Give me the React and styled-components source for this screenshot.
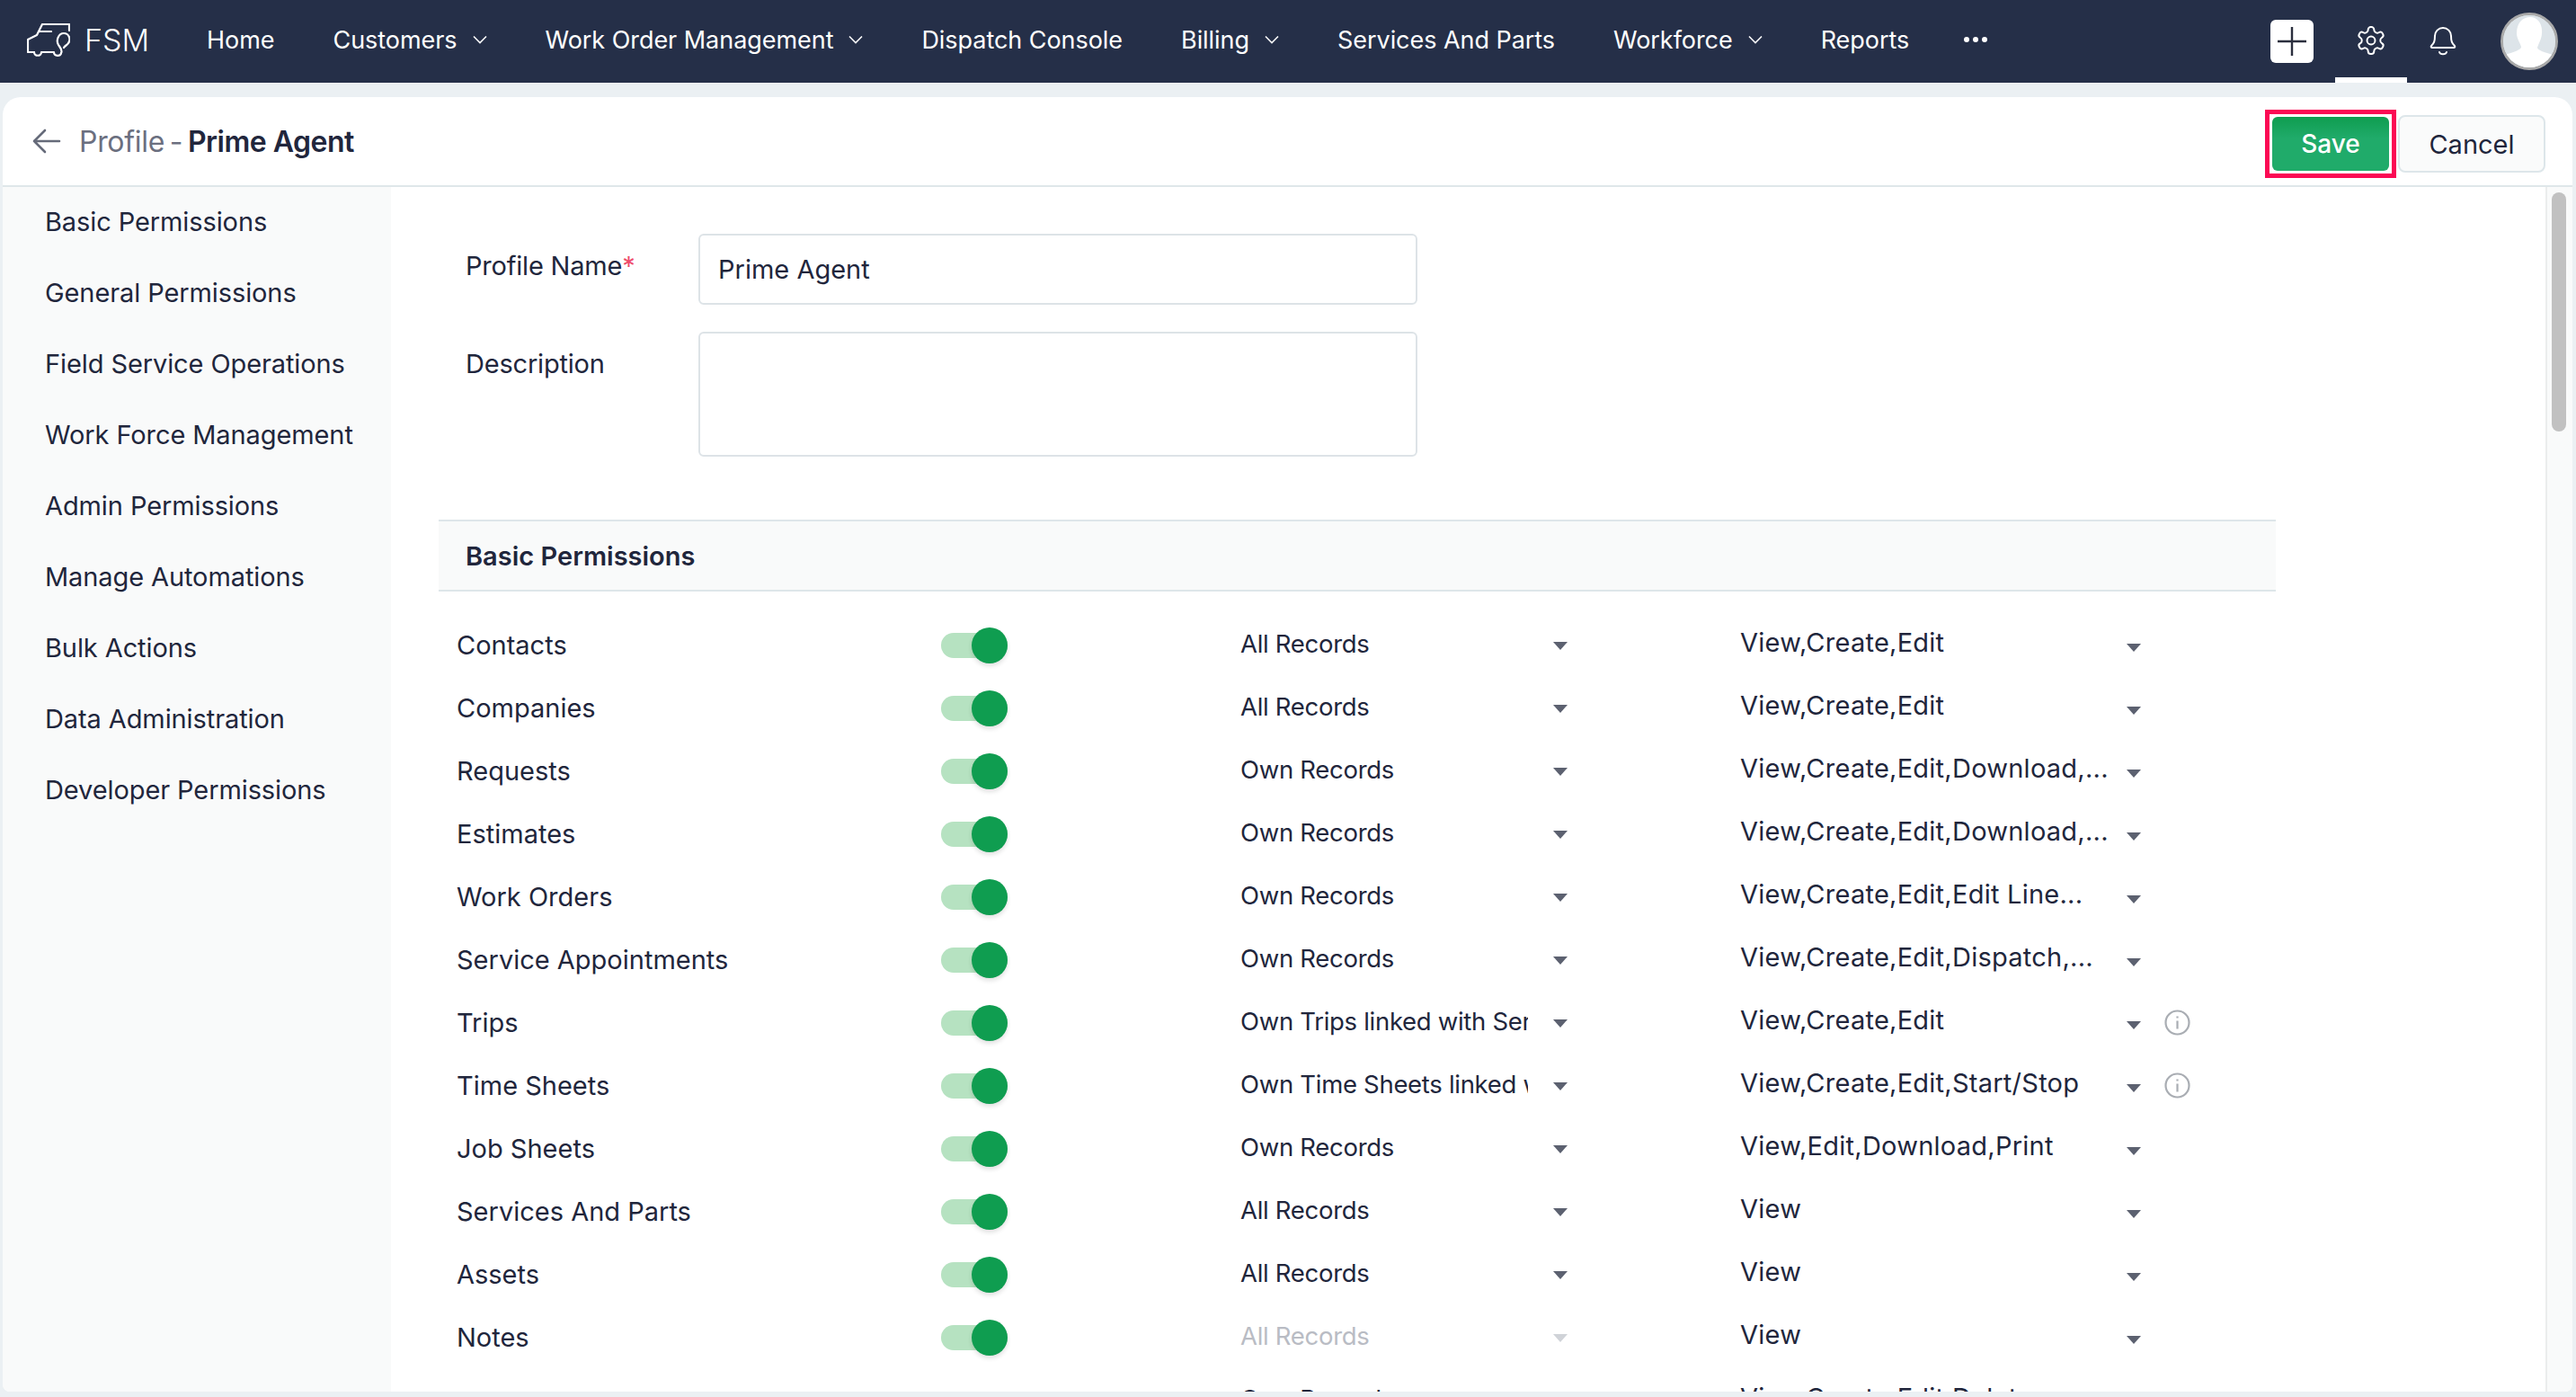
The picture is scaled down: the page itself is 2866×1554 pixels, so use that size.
import React from 'react'
import styled, { createGlobalStyle } from 'styled-components'

const GlobalStyle = createGlobalStyle`
  html, body {
    margin: 0;
    height: 100%;
    overflow: hidden;
    background: #ebf0f3;
    font-family: Inter, "Noto Sans", sans-serif;
    color: #21263c;
  }
  * { box-sizing: border-box; }
`

const Page = styled.div`
  height: 1554px;
  overflow: hidden;
  display: flex;
  flex-direction: column;
`

const TopBar = styled.header`
  height: 92px;
  flex: none;
  background: #252f48;
  display: flex;
  align-items: center;
  padding: 0 20px 0 30px;
  color: #fff;
`

const Brand = styled.div`
  display: flex;
  align-items: center;
  gap: 16px;
  font-size: 34px;
  font-weight: 300;
  width: 200px;
  flex: none;
  padding-bottom: 4px;
`

const Nav = styled.nav`
  display: flex;
  align-items: center;
  gap: 65px;
  flex: 1;
  padding-bottom: 4px;
`

const NavItem = styled.a`
  display: flex;
  align-items: center;
  gap: 17px;
  font-size: 27px;
  letter-spacing: -0.05px;
  white-space: nowrap;
`

const MoreItem = styled(NavItem)`
  margin-left: -6px;
`

const TopIcons = styled.div`
  display: flex;
  align-items: center;
  height: 92px;
`

const PlusBox = styled.div`
  width: 48px;
  height: 48px;
  background: #fff;
  border-radius: 6px;
  display: flex;
  align-items: center;
  justify-content: center;
  margin-right: 24px;
`

const IconTab = styled.div`
  width: 80px;
  height: 92px;
  display: flex;
  align-items: center;
  justify-content: center;
  border-bottom: 6px solid ${p => (p.$active ? '#fff' : 'transparent')};
  padding-top: 4px;
`

const Avatar = styled.div`
  width: 64px;
  height: 64px;
  border-radius: 50%;
  border: 3px solid #a9a9a9;
  background: #dde4e9;
  margin-left: 24px;
  overflow: hidden;
`

const Card = styled.main`
  height: 1440px;
  flex: none;
  margin: 16px 4px 0 3px;
  background: #fff;
  border-radius: 20px 20px 8px 8px;
  display: flex;
  flex-direction: column;
  overflow: hidden;
`

const CardHeader = styled.div`
  height: 100px;
  flex: none;
  border-bottom: 2px solid #dfe7ea;
  display: flex;
  align-items: center;
  padding: 0 30px 0 33px;
`

const Title = styled.div`
  flex: 1;
  display: flex;
  align-items: center;
  gap: 20px;
  font-size: 32px;
  color: #6b6f7f;
  letter-spacing: -0.3px;
  word-spacing: -3px;
  b {
    color: #21263c;
    font-weight: 600;
    word-spacing: 0;
    letter-spacing: -0.5px;
  }
`

const SaveHighlight = styled.div`
  border: 5px solid #fb0a54;
  padding: 3px;
  margin-top: 6px;
  display: flex;
`

const SaveButton = styled.button`
  width: 130px;
  height: 60px;
  border: none;
  border-radius: 6px;
  background: linear-gradient(#0f9d50 0, #20ab6a 40%);
  color: #fff;
  font: 500 28px Inter, sans-serif;
`

const CancelButton = styled.button`
  width: 164px;
  height: 64px;
  margin: 6px 0 0 2px;
  border: 2px solid #dde6ea;
  border-radius: 8px;
  background: #fafbfb;
  color: #21263c;
  font: 400 29px Inter, sans-serif;
`

const Body = styled.div`
  flex: 1;
  display: flex;
  min-height: 0;
`

const SideMenu = styled.aside`
  width: 432px;
  flex: none;
  background: #f9fafa;
  display: flex;
  flex-direction: column;
`

const SideItem = styled.div`
  height: 79px;
  padding: 0 0 2px 47px;
  display: flex;
  align-items: center;
  font-size: 29px;
  letter-spacing: -0.1px;
  white-space: nowrap;
`

const Content = styled.section`
  flex: 1;
  min-width: 0;
  padding: 52px 0 0 53px;
  overflow: hidden;
`

const FormRow = styled.div`
  display: flex;
  margin-bottom: 30px;
`

const FormLabel = styled.label`
  width: 289px;
  padding: 18px 0 0 30px;
  font-size: 29px;
  letter-spacing: -0.2px;
  i {
    color: #ee4b6c;
    font-style: normal;
  }
`

const TextBox = styled.div`
  width: 800px;
  height: ${p => (p.$tall ? '139px' : '79px')};
  border: 2px solid #dde3e7;
  border-radius: 6px;
  padding: 0 20px;
  display: flex;
  align-items: center;
  font-size: 29px;
`

const SectionHead = styled.h2`
  width: 2044px;
  height: 80px;
  margin: 70px 0 0;
  padding: 0 30px;
  background: #f9fafa;
  border-top: 2px solid #dee6ea;
  border-bottom: 2px solid #dee6ea;
  display: flex;
  align-items: center;
  font-size: 29px;
  font-weight: 600;
`

const Rows = styled.div`
  padding-top: 24px;
`

const Row = styled.div`
  height: 70px;
  display: grid;
  grid-template-columns: 539px 333px 556px 1fr;
  align-items: center;
  padding-left: 20px;
  font-size: 29px;
`

const Toggle = styled.div`
  position: relative;
  width: 74px;
  height: 28px;
  margin-top: 2px;
  background: #b6e2c1;
  border-radius: 14px;
  &::after {
    content: '';
    position: absolute;
    right: 0;
    top: -6px;
    width: 40px;
    height: 40px;
    border-radius: 50%;
    background: #0f9d50;
    box-shadow: 0 3px 5px rgba(0, 0, 0, 0.12);
  }
`

const ScopeCell = styled.div`
  display: flex;
  align-items: center;
  justify-content: space-between;
  width: 364px;
  font-size: 27.5px;
  letter-spacing: -0.3px;
  color: ${p => (p.$off ? '#b9bcc4' : '#21263c')};
`

const ScopeText = styled.span`
  width: 320px;
  margin-top: -2px;
  overflow: hidden;
  white-space: nowrap;
`

const Caret = styled.span`
  width: 0;
  height: 0;
  border-left: 8px solid transparent;
  border-right: 8px solid transparent;
  border-top: 9px solid ${p => (p.$off ? '#d0d3d8' : '#5c6170')};
  margin-top: ${p => (p.$low ? '6px' : '2px')};
  flex: none;
`

const PermCell = styled.div`
  display: flex;
  align-items: center;
  width: 510px;
  font-size: 29px;
  letter-spacing: 0.25px;
`

const PermText = styled.span`
  width: 430px;
  margin-top: -5px;
  white-space: nowrap;
`

const InfoIcon = styled.svg`
  margin-left: 26px;
  flex: none;
`

const ScrollTrack = styled.div`
  width: 30px;
  flex: none;
  background: #f9fafa;
  border-left: 2px solid #ebeded;
  padding: 6px 0 0 5px;
`

const ScrollThumb = styled.div`
  width: 16px;
  height: 266px;
  border-radius: 8px;
  background: #c1c1c1;
`

const navItems = [
  ['Home', false],
  ['Customers', true],
  ['Work Order Management', true],
  ['Dispatch Console', false],
  ['Billing', true],
  ['Services And Parts', false],
  ['Workforce', true],
  ['Reports', false],
]

const sideItems = [
  'Basic Permissions',
  'General Permissions',
  'Field Service Operations',
  'Work Force Management',
  'Admin Permissions',
  'Manage Automations',
  'Bulk Actions',
  'Data Administration',
  'Developer Permissions',
]

const rows = [
  ['Contacts', 'All Records', 'View,Create,Edit'],
  ['Companies', 'All Records', 'View,Create,Edit'],
  ['Requests', 'Own Records', 'View,Create,Edit,Download,...'],
  ['Estimates', 'Own Records', 'View,Create,Edit,Download,...'],
  ['Work Orders', 'Own Records', 'View,Create,Edit,Edit Line...'],
  ['Service Appointments', 'Own Records', 'View,Create,Edit,Dispatch,...'],
  ['Trips', 'Own Trips linked with Service Appointments', 'View,Create,Edit', true],
  ['Time Sheets', 'Own Time Sheets linked with Service Appointments', 'View,Create,Edit,Start/Stop', true],
  ['Job Sheets', 'Own Records', 'View,Edit,Download,Print'],
  ['Services And Parts', 'All Records', 'View'],
  ['Assets', 'All Records', 'View'],
  ['Notes', 'All Records', 'View', false, true],
]

const Chevron = () => (
  <svg width="16" height="10" viewBox="0 0 16 10" fill="none" stroke="#fff" strokeWidth="1.6">
    <path d="M1 1.500l7 7 7-7" />
  </svg>
)

const Logo = () => (
  <svg width="48" height="37" viewBox="0 0 48 37" fill="none" stroke="#fff" strokeWidth="2.2" strokeLinejoin="round" strokeLinecap="round">
    <path d="M47 8V1H17l-6 12-10 5v14h7" />
    <path d="M13 9h14" />
    <path d="M8 32c0 5 8 5 8 0h14c0 5 8 5 8 1" />
    <path d="M38 33c2-3-1-6-3-9-3-5 0-13 6-13s8 7 5 11c-1 2-4 3-5 5" />
  </svg>
)

const Gear = () => (
  <svg width="36" height="38" viewBox="0 0 24 24" fill="none" stroke="#fff" strokeWidth="1.300" strokeLinecap="round" strokeLinejoin="round">
    <path d="M12.220 2h-.44a2 2 0 0 0-2 2v.18a2 2 0 0 1-1 1.730l-.43.25a2 2 0 0 1-2 0l-.15-.08a2 2 0 0 0-2.730.73l-.22.38a2 2 0 0 0 .73 2.730l.15.1a2 2 0 0 1 1 1.720v.51a2 2 0 0 1-1 1.740l-.15.09a2 2 0 0 0-.73 2.730l.22.38a2 2 0 0 0 2.730.73l.15-.08a2 2 0 0 1 2 0l.43.25a2 2 0 0 1 1 1.730V20a2 2 0 0 0 2 2h.44a2 2 0 0 0 2-2v-.18a2 2 0 0 1 1-1.730l.43-.25a2 2 0 0 1 2 0l.15.08a2 2 0 0 0 2.730-.73l.22-.39a2 2 0 0 0-.73-2.730l-.15-.08a2 2 0 0 1-1-1.740v-.5a2 2 0 0 1 1-1.740l.15-.09a2 2 0 0 0 .73-2.730l-.22-.38a2 2 0 0 0-2.730-.73l-.15.08a2 2 0 0 1-2 0l-.43-.25a2 2 0 0 1-1-1.730V4a2 2 0 0 0-2-2z" />
    <circle cx="12" cy="12" r="3" />
  </svg>
)

const Bell = () => (
  <svg width="30" height="34" viewBox="0 0 30 34" fill="none" stroke="#fff" strokeWidth="2" strokeLinecap="round" strokeLinejoin="round">
    <path d="M2 23c3-3 4-5 4-11a9 9 0 0 1 18 0c0 6 1 8 4 11 .8 1 0 2-1 2H3c-1 0-1.800-1-1-2z" />
    <path d="M11 30c1 3 7 3 8 0" />
  </svg>
)

const Silhouette = () => (
  <svg width="58" height="58" viewBox="0 0 58 58">
    <rect width="58" height="58" fill="#dde4e9" />
    <path d="M15 20c0-12 7-18 15-18s14 7 13 18c0 6-4 12-5 16 0 3 8 5 20 9v13H0V45c10-4 20-6 20-10-1-4-5-9-5-15z" fill="#fff" />
  </svg>
)

const Info = () => (
  <InfoIcon width="29" height="29" viewBox="0 0 29 29" fill="none" stroke="#a9adb3" strokeWidth="2.200">
    <circle cx="14.500" cy="14.500" r="13" />
    <path d="M14.500 12.500v9M14.500 7.500v2" />
  </InfoIcon>
)

export default function App() {
  return (
    <Page>
      <GlobalStyle />
      <TopBar>
        <Brand>
          <Logo />
          FSM
        </Brand>
        <Nav>
          {navItems.map(([label, hasMenu]) => (
            <NavItem key={label}>
              {label}
              {hasMenu && <Chevron />}
            </NavItem>
          ))}
          <MoreItem>
            <svg width="30" height="8" viewBox="0 0 30 8" fill="#fff">
              <circle cx="5" cy="4" r="3" />
              <circle cx="15" cy="4" r="3" />
              <circle cx="25" cy="4" r="3" />
            </svg>
          </MoreItem>
        </Nav>
        <TopIcons>
          <PlusBox>
            <svg width="32" height="32" viewBox="0 0 32 32" stroke="#2b2f3e" strokeWidth="2.400">
              <path d="M16 0v32M0 16h32" />
            </svg>
          </PlusBox>
          <IconTab $active>
            <Gear />
          </IconTab>
          <IconTab>
            <Bell />
          </IconTab>
          <Avatar>
            <Silhouette />
          </Avatar>
        </TopIcons>
      </TopBar>
      <Card>
        <CardHeader>
          <Title>
            <svg width="32" height="28" viewBox="0 0 32 28" fill="none" stroke="#666b7a" strokeWidth="2.600" strokeLinecap="round" strokeLinejoin="round">
              <path d="M30 14H2M14 2L2 14l12 12" />
            </svg>
            <span>
              Profile - <b>Prime Agent</b>
            </span>
          </Title>
          <SaveHighlight>
            <SaveButton>Save</SaveButton>
          </SaveHighlight>
          <CancelButton>Cancel</CancelButton>
        </CardHeader>
        <Body>
          <SideMenu>
            {sideItems.map(item => (
              <SideItem key={item}>{item}</SideItem>
            ))}
          </SideMenu>
          <Content>
            <FormRow>
              <FormLabel>
                Profile Name<i>*</i>
              </FormLabel>
              <TextBox>Prime Agent</TextBox>
            </FormRow>
            <FormRow>
              <FormLabel>Description</FormLabel>
              <TextBox $tall />
            </FormRow>
            <SectionHead>Basic Permissions</SectionHead>
            <Rows>
              {rows.map(([name, scope, perm, info, off]) => (
                <Row key={name}>
                  <span>{name}</span>
                  <Toggle />
                  <ScopeCell $off={off}>
                    <ScopeText>{scope}</ScopeText>
                    <Caret $off={off} />
                  </ScopeCell>
                  <PermCell>
                    <PermText>{perm}</PermText>
                    <Caret $low />
                    {info && <Info />}
                  </PermCell>
                </Row>
              ))}
              <Row>
                <span />
                <span />
                <ScopeCell>
                  <ScopeText>Own Records</ScopeText>
                </ScopeCell>
                <PermCell>
                  <PermText>View,Create,Edit,Delete</PermText>
                </PermCell>
              </Row>
            </Rows>
          </Content>
          <ScrollTrack>
            <ScrollThumb />
          </ScrollTrack>
        </Body>
      </Card>
    </Page>
  )
}
